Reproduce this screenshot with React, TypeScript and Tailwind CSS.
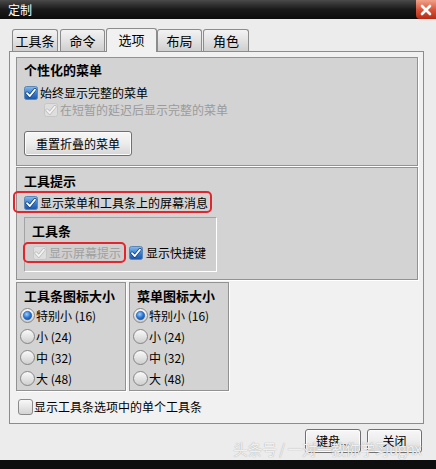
import React from "react";

type CK = "on" | "dis" | "off";

function CheckBox({ kind }: { kind: CK }) {
  if (kind === "on")
    return (
      <svg width="14" height="14" viewBox="0 0 14 14" className="shrink-0">
        <defs>
          <linearGradient id="cbOn" x1="0" y1="0" x2="0" y2="1">
            <stop offset="0" stopColor="#8cbcec" />
            <stop offset="0.5" stopColor="#3a7fcf" />
            <stop offset="1" stopColor="#1a55a8" />
          </linearGradient>
        </defs>
        <rect x="0.5" y="0.5" width="13" height="13" rx="2" fill="url(#cbOn)" stroke="#5a86b8" />
        <path d="M3 7.2 L5.8 10 L11 3.6" fill="none" stroke="#0f3e7a" strokeWidth="3.2" strokeLinecap="round" strokeLinejoin="round" />
        <path d="M3 7.2 L5.8 10 L11 3.6" fill="none" stroke="#ffffff" strokeWidth="1.8" strokeLinecap="round" strokeLinejoin="round" />
      </svg>
    );
  if (kind === "dis")
    return (
      <svg width="14" height="14" viewBox="0 0 14 14" className="shrink-0">
        <rect x="0.5" y="0.5" width="13" height="13" rx="2" fill="#dedede" stroke="#c6c6c6" />
        <path d="M3 7.2 L5.8 10 L11 3.6" fill="none" stroke="#b9b9b9" strokeWidth="3.2" strokeLinecap="round" strokeLinejoin="round" />
        <path d="M3 7.2 L5.8 10 L11 3.6" fill="none" stroke="#f4f4f4" strokeWidth="1.8" strokeLinecap="round" strokeLinejoin="round" />
      </svg>
    );
  return (
    <svg width="15" height="16" viewBox="0 0 15 16" className="shrink-0">
      <defs>
        <linearGradient id="cbOff" x1="0" y1="0" x2="0" y2="1">
          <stop offset="0" stopColor="#fafafa" />
          <stop offset="1" stopColor="#d2d2d2" />
        </linearGradient>
      </defs>
      <rect x="0.5" y="0.5" width="14" height="15" rx="2.5" fill="url(#cbOff)" stroke="#8a8a8a" />
    </svg>
  );
}

function Radio({ on }: { on?: boolean }) {
  return (
    <svg width="15" height="15" viewBox="0 0 15 15" className="shrink-0">
      <defs>
        <linearGradient id="rdBg" x1="0" y1="0" x2="0" y2="1">
          <stop offset="0" stopColor="#fbfbfb" />
          <stop offset="1" stopColor="#cdcdcd" />
        </linearGradient>
        <radialGradient id="rdDot" cx="0.4" cy="0.35" r="0.7">
          <stop offset="0" stopColor="#9fd0ff" />
          <stop offset="0.6" stopColor="#2b74d0" />
          <stop offset="1" stopColor="#174f9e" />
        </radialGradient>
      </defs>
      <circle cx="7.5" cy="7.5" r="7" fill="url(#rdBg)" stroke="#858585" />
      {on && <circle cx="7.5" cy="7.5" r="4.2" fill="url(#rdDot)" stroke="#1e5aa8" strokeWidth="0.6" />}
    </svg>
  );
}

function Tab({ children, w, ml, sel }: { children: React.ReactNode; w: string; ml: string; sel?: boolean }) {
  if (sel)
    return (
      <div
        className={`relative z-10 -mb-[1px] h-[24px] ${w} ${ml} flex items-center justify-center rounded-t-[3px] border-l border-r border-t border-[#8c8c8c] bg-[#f1f1f1] text-[13px] leading-none pb-[3px]`}
      >
        {children}
      </div>
    );
  return (
    <div
      className={`h-[22px] ${w} ${ml} flex items-center justify-center rounded-t-[3px] border-l border-r border-t border-[#8c8c8c] bg-gradient-to-b from-[#f3f3f3] via-[#e2e2e2] to-[#cfcfcf] text-[13px] leading-none`}
    >
      {children}
    </div>
  );
}

function Btn({ children, cls }: { children: React.ReactNode; cls: string }) {
  return (
    <div
      className={`${cls} flex items-center justify-center rounded-[3px] border border-[#707070] bg-gradient-to-b from-[#f7f7f7] via-[#ececec] to-[#d6d6d6] shadow-[inset_0_0_0_1px_#fcfcfc] text-[12px] leading-none`}
    >
      {children}
    </div>
  );
}

export default function App() {
  return (
    <div className="relative w-[436px] h-[469px] overflow-hidden bg-[#ececec] font-['Noto_Sans_CJK_SC','Noto_Sans',sans-serif] text-[12px] text-black flex flex-col">
      {/* title bar */}
      <div className="h-[19px] shrink-0 flex items-center justify-between bg-gradient-to-b from-[#4a4a4a] via-[#1a1a1a] to-[#0c0c0c]">
        <span className="pl-[8px] text-white text-[12px] leading-[19px]">定制</span>
        <div className="w-[20px] h-[19px] rounded-bl-[4px] bg-gradient-to-b from-[#f0a08a] via-[#d9553a] to-[#b52a15] flex items-center justify-center">
          <svg width="12" height="12" viewBox="0 0 12 12">
            <path d="M2 2 L10 10 M10 2 L2 10" stroke="#ffffff" strokeWidth="2.6" strokeLinecap="round" />
          </svg>
        </div>
      </div>

      {/* tabs */}
      <div className="mt-[9px] pl-[12px] h-[23px] shrink-0 flex items-end">
        <Tab w="w-[46px]" ml="ml-0">工具条</Tab>
        <Tab w="w-[45px]" ml="ml-[2px]">命令</Tab>
        <Tab w="w-[51px]" ml="ml-[1px]" sel>选项</Tab>
        <Tab w="w-[45px]" ml="ml-0">布局</Tab>
        <Tab w="w-[46px]" ml="ml-[1px]">角色</Tab>
      </div>

      {/* panel */}
      <div className="ml-[9px] w-[415px] h-[373px] shrink-0 border border-[#8c8c8c] bg-[#f1f1f1] pl-[6px] pt-[5px] flex flex-col">
        {/* group 1 */}
        <div className="w-[402px] h-[109px] shrink-0 border border-[#929292] bg-[#d3d3d3] shadow-[1px_1px_0_#ffffff] pl-[7px] pt-[4px] flex flex-col">
          <div className="font-bold text-[13px] leading-[16px]">个性化的菜单</div>
          <div className="mt-[7px] h-[16px] flex items-center">
            <CheckBox kind="on" />
            <span className="ml-[2px] leading-none">始终显示完整的菜单</span>
          </div>
          <div className="mt-[1px] ml-[20px] h-[16px] flex items-center text-[#9b9b9b]">
            <CheckBox kind="dis" />
            <span className="ml-[2px] leading-none">在短暂的延迟后显示完整的菜单</span>
          </div>
          <Btn cls="mt-[13px] w-[108px] h-[25px]">重置折叠的菜单</Btn>
        </div>

        {/* group 2 */}
        <div className="mt-[1px] w-[402px] h-[113px] shrink-0 border border-[#929292] bg-[#d3d3d3] shadow-[1px_1px_0_#ffffff] pl-[7px] pt-[5px] flex flex-col">
          <div className="font-bold text-[13px] leading-[16px]">工具提示</div>
          <div className="relative mt-[6px] h-[16px] flex items-center">
            <div className="absolute -left-[11px] -top-[4px] w-[199px] h-[22px] rounded-[5px] border-2 border-[#e3262e]" />
            <CheckBox kind="on" />
            <span className="ml-[2px] leading-none">显示菜单和工具条上的屏幕消息</span>
          </div>
          <div className="mt-[6px] w-[193px] h-[55px] border-l border-t border-r border-b border-l-[#a3a3a3] border-t-[#a3a3a3] border-r-white border-b-white bg-[#cfcfcf] pl-[7px] pt-[5px] flex flex-col">
            <div className="font-bold text-[13px] leading-[16px]">工具条</div>
            <div className="relative mt-[6px] h-[16px] flex items-center">
              <div className="absolute -left-[9px] -top-[3px] w-[103px] h-[21px] rounded-[5px] border-2 border-[#e3262e]" />
              <span className="ml-[1px]">
                <CheckBox kind="dis" />
              </span>
              <span className="ml-[2px] leading-none text-[#a0a0a0]">显示屏幕提示</span>
              <span className="ml-[8px]">
                <CheckBox kind="on" />
              </span>
              <span className="ml-[3px] leading-none">显示快捷键</span>
            </div>
          </div>
        </div>

        {/* groups 3 & 4 */}
        <div className="mt-[2px] flex gap-[3px] shrink-0">
          {[
            { t: "工具条图标大小", w: "w-[110px]" },
            { t: "菜单图标大小", w: "w-[100px]" },
          ].map((g) => (
            <div
              key={g.t}
              className={`${g.w} h-[109px] border border-[#929292] bg-[#d3d3d3] shadow-[1px_1px_0_#ffffff] pl-[3px] pt-[5px] flex flex-col`}
            >
              <div className="ml-[4px] font-bold text-[13px] leading-[16px] whitespace-nowrap">{g.t}</div>
              <div className="mt-[1px] flex flex-col">
                {[
                  ["特别小 (16)", true],
                  ["小 (24)", false],
                  ["中 (32)", false],
                  ["大 (48)", false],
                ].map(([label, on]) => (
                  <div key={label as string} className="h-[21px] flex items-center">
                    <Radio on={on as boolean} />
                    <span className="ml-[1px] leading-none whitespace-nowrap">{label as string}</span>
                  </div>
                ))}
              </div>
            </div>
          ))}
        </div>

        {/* bottom checkbox */}
        <div className="mt-[8px] ml-[2px] h-[16px] flex items-center">
          <CheckBox kind="off" />
          <span className="ml-[1px] leading-none">显示工具条选项中的单个工具条</span>
        </div>
      </div>

      {/* buttons */}
      <div className="mt-[5px] pr-[14px] flex justify-end gap-[6px] shrink-0">
        <Btn cls="w-[56px] h-[24px]">键盘...</Btn>
        <Btn cls="w-[55px] h-[24px]">关闭</Btn>
      </div>

      <div className="mt-[7px] flex-1 bg-[#0e0e0e]" />

      {/* watermark */}
      <div className="absolute left-[233px] top-[440px] text-[15px] leading-[18px] tracking-[-0.5px] text-white/85 [text-shadow:0_0_1px_#8a8a8a] whitespace-nowrap">
        头条号 / 一对一教你学习ugnx
      </div>
    </div>
  );
}
